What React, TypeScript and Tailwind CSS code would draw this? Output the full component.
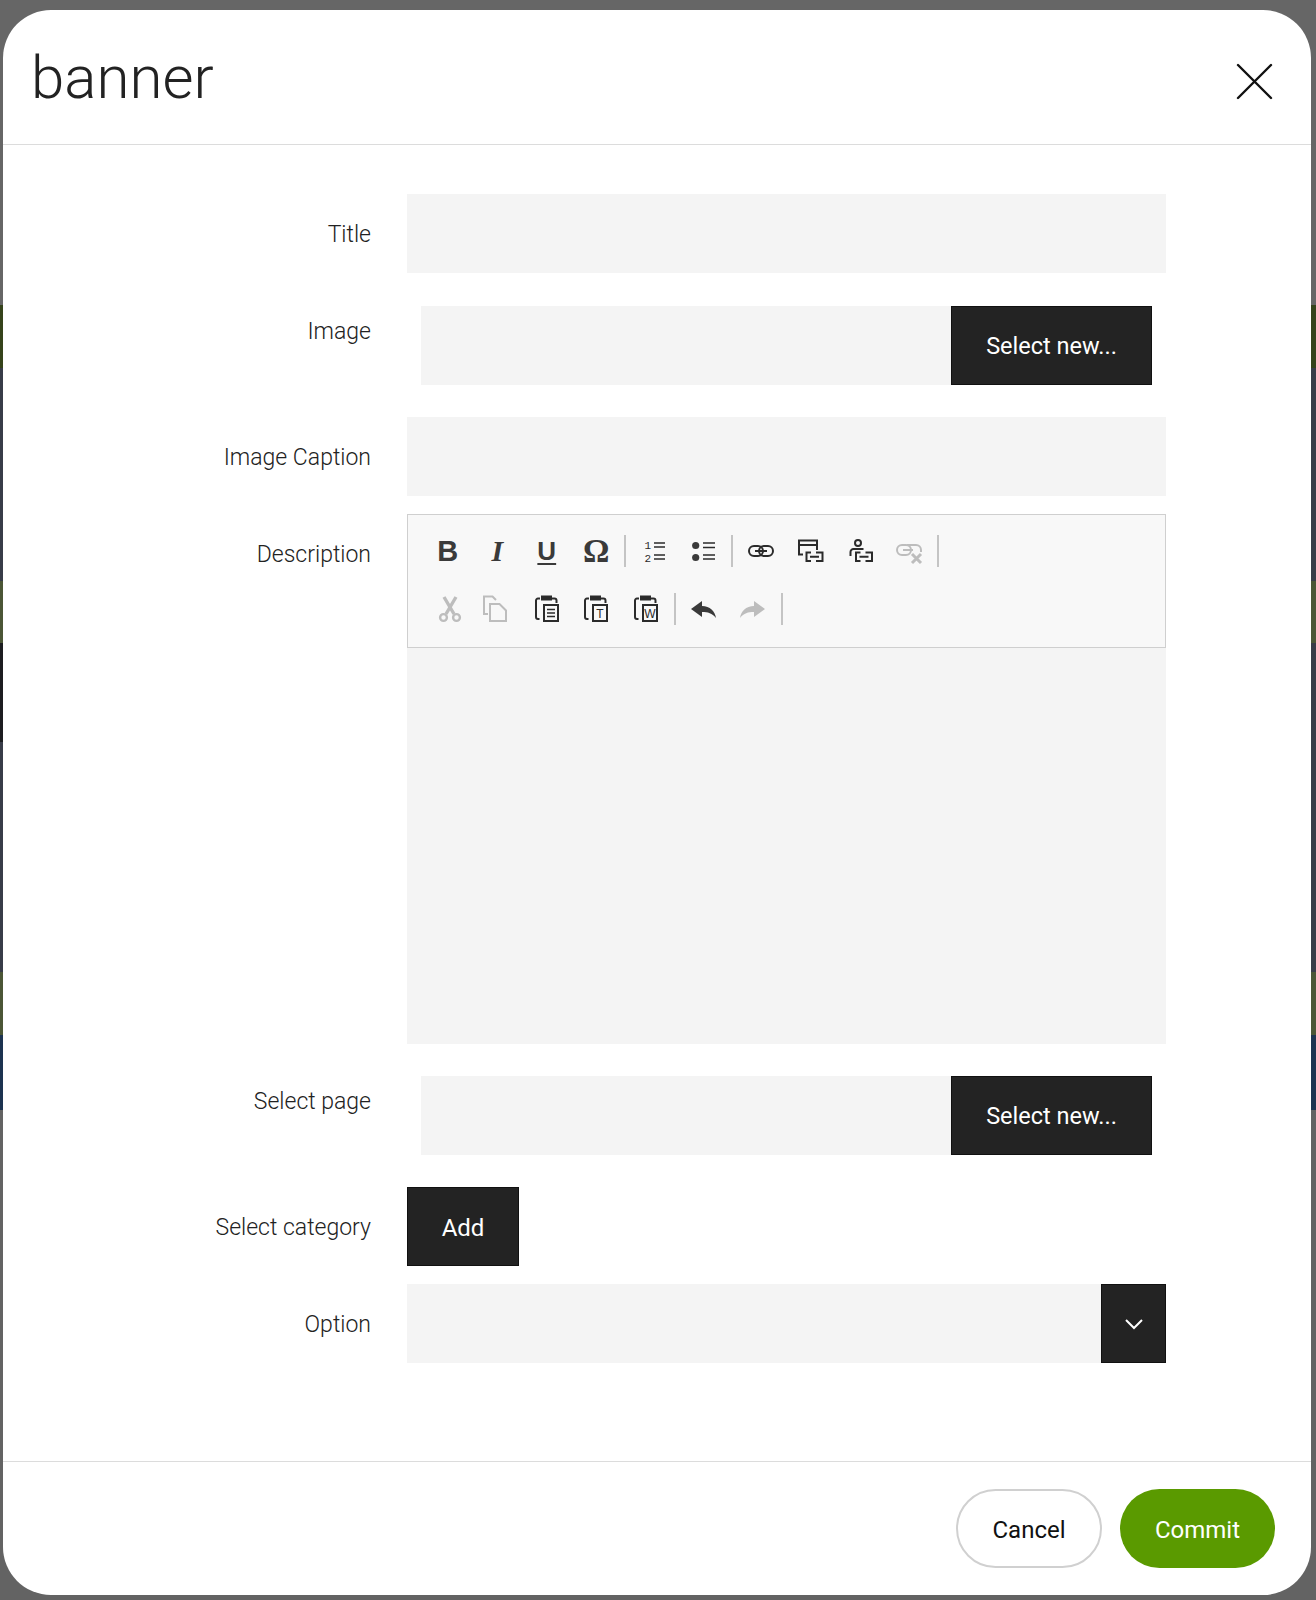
import React from "react";

const DARK = "#2b2b2b";
const GREY = "#bdbdbd";

function Icon({ children }: { children: React.ReactNode }) {
  return (
    <svg width="28" height="28" viewBox="0 0 28 28" fill="none" stroke={DARK} strokeWidth="2">
      {children}
    </svg>
  );
}

function Paste({ children }: { children?: React.ReactNode }) {
  return (
    <Icon>
      <path d="M7 3.5H5a2 2 0 0 0-2 2V22a2 2 0 0 0 2 2h1.5" />
      <path d="M19 3.5h2.5a2 2 0 0 1 2 2V8" />
      <path d="M9 4.5V1.5h9v3z" fill={DARK} />
      <rect x="11" y="10" width="14" height="16" />
      {children}
    </Icon>
  );
}

function LinkBox({ x, y }: { x: number; y: number }) {
  return (
    <g transform={`translate(${x} ${y})`}>
      <path d="M6 0H1.5v8.5H6M11 0h6.5v8.5H11M5 4.2h9" />
    </g>
  );
}

const row1: React.ReactNode[][] = [
  [
    <span key="b" className="font-['Liberation_Sans'] text-[29px] leading-none font-bold text-[#3a3a3a]">B</span>,
    <span key="i" className="font-['Liberation_Serif'] text-[30px] leading-none font-bold italic text-[#3a3a3a]">I</span>,
    <span key="u" className="font-['Liberation_Sans'] text-[26px] leading-none font-bold text-[#3a3a3a] underline decoration-2 underline-offset-[3px]">U</span>,
    <span key="o" className="font-['Liberation_Serif'] text-[33px] leading-none font-bold text-[#3a3a3a]">Ω</span>,
  ],
  [
    <Icon key="ol">
      <text x="4.5" y="12" fontSize="11" fontFamily="Liberation Mono" fill={DARK} stroke="none">1</text>
      <text x="4.5" y="25" fontSize="11" fontFamily="Liberation Mono" fill={DARK} stroke="none">2</text>
      <path d="M14 6h11M14 10h11M14 18h11M14 22h11" strokeWidth="1.7" />
    </Icon>,
    <Icon key="ul">
      <circle cx="6.7" cy="8.5" r="3.6" fill="#3a3a3a" stroke="none" />
      <circle cx="6.7" cy="20.5" r="3.6" fill="#3a3a3a" stroke="none" />
      <path d="M14 6h12M14 10.5h12M14 18h12M14 22h12" strokeWidth="1.7" />
    </Icon>,
  ],
  [
    <Icon key="link">
      <rect x="2" y="9" width="14" height="10" rx="5" />
      <rect x="12" y="9" width="14" height="10" rx="5" />
      <path d="M8 14h12" />
    </Icon>,
    <Icon key="anchor">
      <path d="M21 13V3.5H3V17.5H7M3 8h18" />
      <LinkBox x={9} y={15.5} />
    </Icon>,
    <Icon key="person">
      <circle cx="12" cy="6" r="3" />
      <path d="M5.5 18h-1v-3a3 3 0 0 1 3-3h10" />
      <LinkBox x={8.5} y={15.5} />
    </Icon>,
    <svg key="unlink" width="28" height="28" viewBox="0 0 28 28" fill="none" stroke={GREY} strokeWidth="2">
      <rect x="2" y="8" width="14" height="10" rx="5" />
      <path d="M12 8h9a5 5 0 0 1 5 5v2M8 13h10" />
      <path d="M17 17l9 9M26 17l-9 9" strokeWidth="3" />
    </svg>,
  ],
];

const row2: React.ReactNode[][] = [
  [
    <svg key="cut" width="28" height="28" viewBox="0 0 28 28" fill="none" stroke={GREY} className="translate-x-[2px]">
      <path d="M20 2L10 19M8 2l10 17" strokeWidth="3.4" />
      <circle cx="7.5" cy="22.5" r="3.4" strokeWidth="2.4" />
      <circle cx="20.5" cy="22.5" r="3.4" strokeWidth="2.4" />
    </svg>,
    <svg key="copy" width="28" height="28" viewBox="0 0 28 28" fill="none" stroke={GREY} strokeWidth="2" className="-translate-x-[2px]">
      <path d="M7 19H3V1.5h8.5L15 5" />
      <path d="M9 9h9.5l6.5 6.5V26H9z" />
    </svg>,
    <Paste key="paste">
      <path d="M14 14.5h8M14 18h8M14 21.5h8" strokeWidth="1.6" />
    </Paste>,
    <Paste key="text">
      <text x="18" y="23" fontSize="12" textAnchor="middle" fontFamily="Liberation Sans" fill={DARK} stroke="none">T</text>
    </Paste>,
    <Paste key="word">
      <text x="18" y="23" fontSize="12" textAnchor="middle" fontFamily="Liberation Sans" fill={DARK} stroke="none">W</text>
    </Paste>,
  ],
  [
    <svg key="undo" width="28" height="28" viewBox="0 0 28 28" fill="#3a3a3a">
      <path d="M2 14l11-8v5c8 0 13 5 14 12-4-5-8-6-14-6v5z" />
    </svg>,
    <svg key="redo" width="28" height="28" viewBox="0 0 28 28" fill={GREY}>
      <path d="M26 14l-11-8v5C7 11 2 16 1 23c4-5 8-6 14-6v5z" />
    </svg>,
  ],
];

function ToolRow({ groups }: { groups: React.ReactNode[][] }) {
  return (
    <div className="flex h-[58px] items-center">
      {groups.map((group, g) => (
        <div key={g} className="flex items-center">
          {group.map((icon, i) => (
            <div key={i} className="flex h-[36px] w-[49.5px] items-center justify-center">
              {icon}
            </div>
          ))}
          <div className="mx-[3px] h-[32px] w-[2px] bg-[#c4c4c4]" />
        </div>
      ))}
    </div>
  );
}

function Row({ label, children, pad }: { label: string; children: React.ReactNode; pad?: string }) {
  return (
    <div className="flex">
      <div
        className={
          pad
            ? `w-[368px] text-right text-[23px] leading-[32px] font-light text-[#222] ${pad}`
            : "flex h-[79px] w-[368px] items-center justify-end pt-[3px] text-[23px] font-light text-[#222]"
        }
      >
        {label}
      </div>
      <div className="ml-[36px] w-[759px]">{children}</div>
    </div>
  );
}

function Picker() {
  return (
    <div className="flex pl-[14px]">
      <div className="h-[79px] w-[530px] bg-[#f4f4f4]" />
      <button className="h-[79px] w-[201px] border border-[#111] bg-[#232323] pt-[2px] text-[23.5px] font-[450] text-white">Select new...</button>
    </div>
  );
}

const bands = [
  "h-[305px] bg-[#666666]",
  "h-[63px] bg-[#35431b]",
  "h-[213px] bg-[#383c48]",
  "h-[62px] bg-[#4b5636]",
  "h-[99px] bg-[linear-gradient(90deg,#1c1d20,#383c48)]",
  "h-[230px] bg-[#383c48]",
  "h-[63px] bg-[#4b5636]",
  "h-[75px] bg-[#1d3350]",
  "h-[490px] bg-[#636363]",
];

export default function App() {
  return (
    <div className="relative h-[1600px] w-[1316px] overflow-hidden font-['Roboto',sans-serif]">
      {/* Page behind the dialog */}
      {bands.map((b) => (
        <div key={b} className={b} />
      ))}

      {/* Dialog */}
      <div className="absolute top-[10px] left-[3px] flex h-[1585px] w-[1308px] flex-col rounded-[48px] bg-white">
        <div className="flex h-[135px] shrink-0 items-start justify-between border-b border-[#dcdcdc] pr-[38px] pl-[28px]">
          <h1 className="mt-[26px] text-[60px] leading-[84px] font-light text-[#222]">banner</h1>
          <svg width="37" height="37" viewBox="0 0 37 37" className="mt-[53px]" stroke="#111" strokeWidth="2.4" strokeLinecap="round">
            <path d="M2 2l33 33M35 2L2 35" />
          </svg>
        </div>

        <div className="flex flex-1 flex-col pt-[49px]">
          <Row label="Title">
            <div className="h-[79px] bg-[#f4f4f4]" />
          </Row>
          <div className="mt-[33px]">
            <Row label="Image" pad="pt-[10px]">
              <Picker />
            </Row>
          </div>
          <div className="mt-[32px]">
            <Row label="Image Caption">
              <div className="h-[79px] bg-[#f4f4f4]" />
            </Row>
          </div>
          <div className="mt-[18px]">
            <Row label="Description" pad="pt-[25px]">
              <div className="flex h-[530px] flex-col">
                <div className="h-[134px] border border-[#cfcfcf] bg-[#f8f8f8] pt-[7px] pl-[15px]">
                  <ToolRow groups={row1} />
                  <ToolRow groups={row2} />
                </div>
                <div className="flex-1 bg-[#f4f4f4]" />
              </div>
            </Row>
          </div>
          <div className="mt-[32px]">
            <Row label="Select page" pad="pt-[10px]">
              <Picker />
            </Row>
          </div>
          <div className="mt-[32px]">
            <Row label="Select category">
              <button className="h-[79px] w-[112px] border border-[#111] bg-[#232323] pt-[3px] text-[24px] font-[450] text-white">Add</button>
            </Row>
          </div>
          <div className="mt-[18px]">
            <Row label="Option">
              <div className="flex h-[79px] bg-[#f4f4f4]">
                <div className="flex-1" />
                <div className="flex w-[65px] items-center justify-center border border-[#111] bg-[#232323]">
                  <svg width="20" height="12" viewBox="0 0 20 12" fill="none" stroke="#fff" strokeWidth="2">
                    <path d="M2 2l8 8 8-8" />
                  </svg>
                </div>
              </div>
            </Row>
          </div>
        </div>

        <div className="flex h-[134px] shrink-0 items-start justify-end gap-[18px] border-t border-[#dcdcdc] pt-[27px] pr-[36px]">
          <button className="h-[79px] w-[146px] rounded-full border-2 border-[#d0d0d0] bg-white pt-[2px] text-[24px] text-[#111]">Cancel</button>
          <button className="h-[79px] w-[155px] rounded-full bg-[#5a9a00] pt-[2px] text-[24px] font-[450] text-white">Commit</button>
        </div>
      </div>
    </div>
  );
}
